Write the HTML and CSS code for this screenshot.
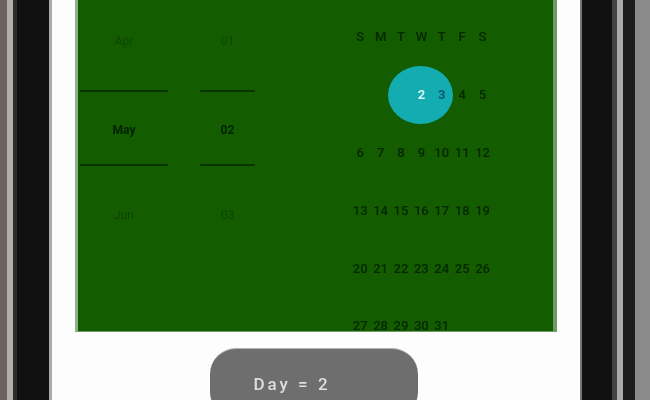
FILE: index.html
```html
<!DOCTYPE html>
<html lang="en">
  <head>
    <meta charset="UTF-8" />
    <title>Date Picker</title>
    <link rel="stylesheet" href="styles.css">
  </head>
  <body>
    <div class="device">
      <div class="bezel bezel-left">
        <div class="strip s1"></div>
        <div class="strip s2"></div>
        <div class="strip s3"></div>
        <div class="strip s4"></div>
        <div class="strip s5"></div>
      </div>

      <div class="screen">
        <div class="panel">
          <div class="wheel wheel-month">
            <div class="wheel-item before">Apr</div>
            <div class="wheel-item current">May</div>
            <div class="wheel-item after">Jun</div>
          </div>
          <div class="wheel wheel-day">
            <div class="wheel-item before">01</div>
            <div class="wheel-item current">02</div>
            <div class="wheel-item after">03</div>
          </div>

          <div class="calendar">
            <div class="cell">S</div><div class="cell">M</div><div class="cell">T</div><div class="cell">W</div><div class="cell">T</div><div class="cell">F</div><div class="cell">S</div>

            <div class="cell"></div><div class="cell"></div><div class="cell"></div>
            <div class="cell selected"><span class="circle"></span><span class="num">2</span></div>
            <div class="cell over">3</div><div class="cell">4</div><div class="cell">5</div>

            <div class="cell">6</div><div class="cell">7</div><div class="cell">8</div><div class="cell">9</div><div class="cell">10</div><div class="cell">11</div><div class="cell">12</div>
            <div class="cell">13</div><div class="cell">14</div><div class="cell">15</div><div class="cell">16</div><div class="cell">17</div><div class="cell">18</div><div class="cell">19</div>
            <div class="cell">20</div><div class="cell">21</div><div class="cell">22</div><div class="cell">23</div><div class="cell">24</div><div class="cell">25</div><div class="cell">26</div>
            <div class="cell">27</div><div class="cell">28</div><div class="cell">29</div><div class="cell">30</div><div class="cell">31</div>
          </div>
        </div>

        <div class="toast"><span class="toast-text">Day = 2</span></div>
      </div>

      <div class="bezel bezel-right">
        <div class="strip s6"></div>
        <div class="strip s7"></div>
        <div class="strip s8"></div>
        <div class="strip s9"></div>
        <div class="strip s10"></div>
        <div class="strip s11"></div>
      </div>
    </div>
  </body>
</html>
```

FILE: styles.css
```css
html,
body {
  margin: 0;
  padding: 0;
  height: 400px;
  overflow: hidden;
  background-color: #111;
}
.device {
  display: flex;
  width: 650px;
  height: 400px;
  overflow: hidden;
  font-family: Roboto, Arial, sans-serif;
  filter: blur(0.7px);
}
.bezel {
  display: flex;
  flex-shrink: 0;
}
.strip {
  height: 400px;
}
.s1 { width: 7px; background-color: #6a625e; }
.s2 { width: 6px; background-color: #b5aeaa; }
.s3 { width: 4px; background-color: #2c2c2c; }
.s4 { width: 32px; background-color: #111; }
.s5 { width: 3px; background-color: #aaa; }
.s6 { width: 2px; background-color: #777; }
.s7 { width: 30px; background-color: #111; }
.s8 { width: 5px; background-color: #444; }
.s9 { width: 6px; background-color: #aaa; }
.s10 { width: 12px; background-color: #1c1c1c; }
.s11 { width: 15px; background-color: #8a8a8a; }

.screen {
  width: 528px;
  height: 400px;
  flex-shrink: 0;
  padding: 0 23px;
  box-sizing: border-box;
  background-color: #fdfdfd;
}
.panel {
  display: flex;
  width: 482px;
  height: 332px;
  box-sizing: border-box;
  padding-left: 2px;
  overflow: hidden;
  background-color: #145c00;
  border-left: 3px solid #8fb088;
  border-right: 4px solid #6f9a66;
  border-bottom: 1px solid #6f9a66;
}
.wheel {
  flex-shrink: 0;
  font-size: 12px;
  filter: blur(0.5px);
}
.wheel-month {
  width: 88px;
  margin-right: 32px;
}
.wheel-day {
  width: 55px;
}
.wheel-item {
  display: flex;
  align-items: center;
  justify-content: center;
  box-sizing: border-box;
}
.before {
  height: 90px;
  padding-bottom: 8px;
  color: #0f4400;
}
.current {
  height: 76px;
  padding-top: 4px;
  font-weight: bold;
  color: #032200;
  border-top: 2px solid #083600;
  border-bottom: 2px solid #083600;
}
.after {
  height: 98px;
  color: #0f4400;
}
.calendar {
  display: grid;
  grid-template-columns: repeat(7, 20.4px);
  grid-auto-rows: 57.8px;
  width: 143px;
  margin-left: 95px;
  padding-top: 8px;
  flex-shrink: 0;
  filter: blur(0.5px);
}
.cell {
  position: relative;
  display: flex;
  align-items: center;
  justify-content: center;
  font-size: 13px;
  font-weight: 500;
  white-space: nowrap;
  color: #042600;
}
.circle {
  position: absolute;
  left: -23px;
  top: 0;
  width: 65px;
  height: 58px;
  border-radius: 50%;
  background-color: #13acb0;
}
.num {
  position: relative;
  font-weight: bold;
  color: #d8f5f5;
}
.over {
  color: #0a5a78;
  font-weight: bold;
}
.toast {
  width: 208px;
  height: 70px;
  margin: 16px 0 0 135px;
  box-sizing: border-box;
  padding: 25px 44px 0 0;
  text-align: center;
  background-color: #6e6e6e;
  border-top: 1px solid #b5b5b5;
  border-radius: 26px;
}
.toast-text {
  font-size: 17px;
  font-weight: 500;
  letter-spacing: 3px;
  color: #dedede;
}
```
